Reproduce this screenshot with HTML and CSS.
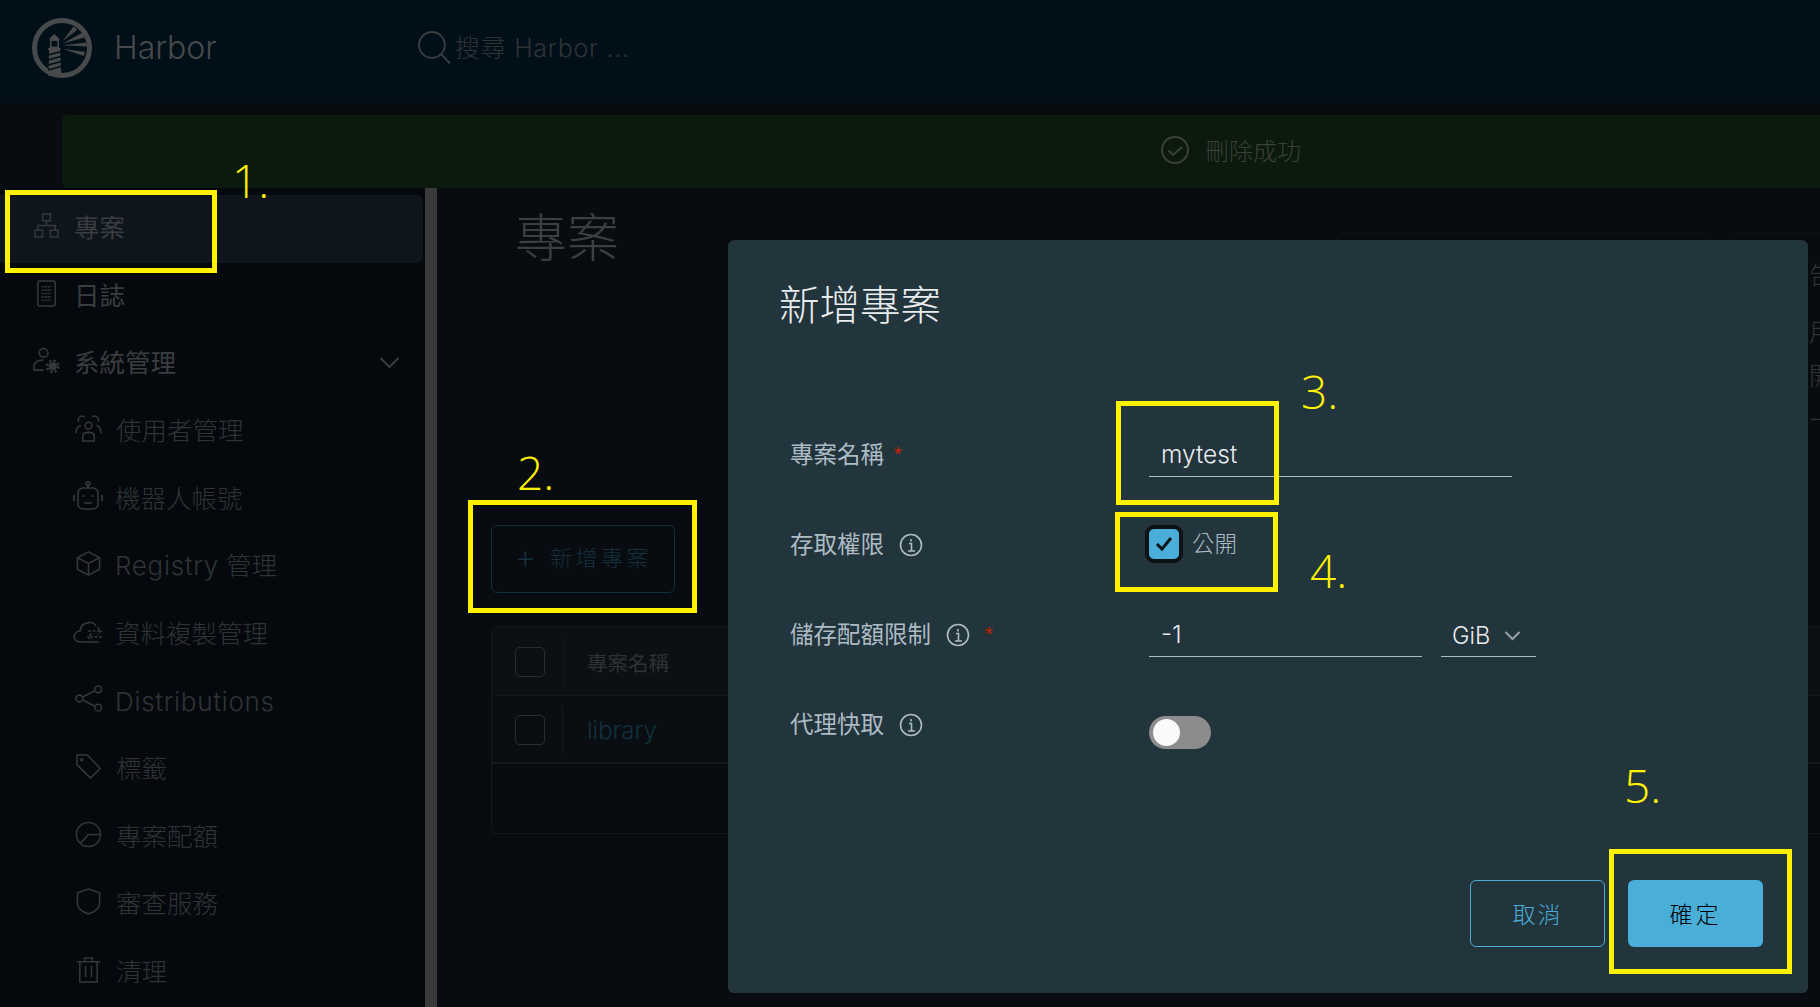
FILE: index.html
```html
<!DOCTYPE html>
<html lang="zh-Hant">
<head>
  <meta charset="UTF-8" />
  <meta name="viewport" content="width=device-width, initial-scale=1.0"/>
  <title>Harbor</title>
  <link rel="stylesheet" href="styles.css">
</head>
<body>
  <header class="topbar">
    <div class="brand">
      <svg class="logo" viewBox="0 0 60 60">
        <circle cx="30" cy="30" r="27.5" fill="none" stroke="currentColor" stroke-width="5"/>
        <path d="M22.200 16L28 21.200h-1v8.500h1.600V32H28l1.500 26h-13L17 32h-.8v-2.300H18v-8.500h-1.100z" fill="currentColor"/>
        <path d="M19.500 23h5.800v5.600h-5.800z" fill="#000f18"/>
        <path d="M16 37l13-3.500M16 42l13-3.500M16 47l13-3.500M16 52l13-3.500" stroke="#000f18" stroke-width="1.500"/>
        <path d="M30.700 22.900L41.500 8.400l4 3.400zM30.700 25.600l20.200-11.100 1.700 5.100zM30.700 27.300l23.900-2.700v4zM30.700 30.700L53.300 34l-1.700 4z" fill="currentColor"/>
      </svg>
      <span class="brand-name">Harbor</span>
    </div>
    <div class="search">
      <svg class="search-icon" viewBox="0 0 32 32" fill="none" stroke="currentColor" stroke-width="1.8">
        <circle cx="13.5" cy="13.5" r="12.5"/>
        <path d="M23 23l8 8.5"/>
      </svg>
      <span class="search-text">搜尋 Harbor ...</span>
    </div>
  </header>

  <div class="alert">
    <svg class="alert-icon" viewBox="0 0 30 30" fill="none" stroke="currentColor" stroke-width="2">
      <circle cx="15" cy="15" r="13"/>
      <path d="M8.500 15.500l4.500 4.500 9-8"/>
    </svg>
    <span>刪除成功</span>
  </div>

  <div class="layout">
    <nav class="sidebar">
      <a class="nav-item active">
        <svg class="nav-icon" viewBox="0 0 28 28"><path d="M10 2h8v7h-8zM14 9v5M5 19v-5h18v5M2 19h8v7H2zM18 19h8v7h-8z"/></svg>
        <span>專案</span>
      </a>
      <a class="nav-item">
        <svg class="nav-icon" viewBox="0 0 28 28"><rect x="5" y="1" width="18" height="26" rx="2"/><path d="M9 7h10M9 10.500h10M9 14h10M9 17.500h10M9 21h10" stroke-dasharray="2 1"/></svg>
        <span>日誌</span>
      </a>
      <a class="nav-item parent">
        <svg class="nav-icon" viewBox="0 0 28 28">
          <circle cx="11" cy="6" r="4.500"/>
          <path d="M1 24v-3c0-5 4-7.500 10-7.500M1 24h10"/>
          <circle class="gear-core" cx="20.500" cy="20" r="4.200"/>
          <circle class="gear-teeth" cx="20.500" cy="20" r="5.800"/>
        </svg>
        <span>系統管理</span>
        <svg class="chevron" viewBox="0 0 20 12"><path d="M1 1l9 9 9-9"/></svg>
      </a>
      <a class="nav-item child">
        <svg class="nav-icon" viewBox="0 0 28 28"><circle cx="14" cy="11" r="3.500"/><path d="M8 27v-5c0-3 3-4 6-4s6 1 6 4v5zM4 7a4 4 0 0 1 6-5M24 7a4 4 0 0 0-6-5M1 19c0-4 1-7 5-8M27 19c0-4-1-7-5-8"/></svg>
        <span>使用者管理</span>
      </a>
      <a class="nav-item child">
        <svg class="nav-icon big" viewBox="0 0 30 30"><rect x="5" y="7" width="20" height="21" rx="5"/><circle cx="15" cy="2.500" r="1.800"/><path d="M15 4.500V7M1 14v6M29 14v6M11 22h8M10.500 14v2M19.500 14v2"/></svg>
        <span>機器人帳號</span>
      </a>
      <a class="nav-item child">
        <svg class="nav-icon" viewBox="0 0 28 28"><path d="M14 2l11.500 6v12L14 26 2.500 20V8zM2.500 8L14 14l11.500-6M14 14v12"/></svg>
        <span class="latin">Registry<b>管理</b></span>
      </a>
      <a class="nav-item child">
        <svg class="nav-icon big" viewBox="0 0 30 30"><path d="M26 26H8c-9 0-9-10-1-11 1-9 13-11 16-5"/><path d="M15 15h13M24.500 11.500L28 15l-3.500 3.500M29 21H15M18.500 17.500L15 21l3.500 3.500" stroke-dasharray="3 1.500"/></svg>
        <span>資料複製管理</span>
      </a>
      <a class="nav-item child">
        <svg class="nav-icon" viewBox="0 0 28 28"><circle cx="24" cy="4.500" r="3.500"/><circle cx="4.500" cy="14" r="3.500"/><circle cx="24" cy="23.500" r="3.500"/><path d="M7.800 12.500L20.800 6M7.800 15.500l13 6.500"/></svg>
        <span class="latin only">Distributions</span>
      </a>
      <a class="nav-item child">
        <svg class="nav-icon" viewBox="0 0 28 28"><path d="M2 2h11l13 14-10 10L2 12z"/><circle cx="7" cy="7" r="1"/></svg>
        <span>標籤</span>
      </a>
      <a class="nav-item child">
        <svg class="nav-icon" viewBox="0 0 28 28"><circle cx="14" cy="14" r="12.500"/><path d="M6 23l8-9h12.500"/></svg>
        <span>專案配額</span>
      </a>
      <a class="nav-item child">
        <svg class="nav-icon" viewBox="0 0 28 28"><path d="M14 1l11.500 4v11c0 5-6 9-11.500 11C8.500 25 2.500 21 2.500 16V5z"/></svg>
        <span>審查服務</span>
      </a>
      <a class="nav-item child">
        <svg class="nav-icon" viewBox="0 0 28 28"><path d="M2 6h24M5 6v21h18V6M10 6V2h8v4M11 10v12M17 10v12"/></svg>
        <span>清理</span>
      </a>
    </nav>
    <div class="scrollbar"></div>

    <main class="content">
      <h1>專案</h1>
      <div class="summary">
        <div class="summary-card"></div>
        <div class="summary-card quota-card">
          <span>告</span>
          <span>用</span>
          <span>開</span>
          <span>十</span>
        </div>
      </div>
      <button class="new-btn"><span class="plus">+</span>新增專案</button>
      <div class="grid">
        <div class="grid-row head">
          <span class="box"></span><i class="sep"></i><span>專案名稱</span>
        </div>
        <div class="grid-row body-row">
          <span class="box"></span><i class="sep short"></i><a class="link">library</a>
        </div>
      </div>
    </main>
  </div>

  <section class="modal">
    <h2>新增專案</h2>
    <div class="form">
      <div class="field">
        <label>專案名稱<em class="tight">*</em></label>
        <div class="input wide">mytest</div>
      </div>
      <div class="field">
        <label>存取權限
          <svg class="info" viewBox="0 0 24 24"><circle cx="12" cy="12" r="10.500"/><path d="M10 10.500h2.500V18M9 18h7M12 6v2.500"/></svg>
        </label>
        <div class="check-wrap">
          <span class="check"><svg viewBox="0 0 18 16"><path d="M2 8l5 5 9-11"/></svg></span>
          <span>公開</span>
        </div>
      </div>
      <div class="field">
        <label>儲存配額限制
          <svg class="info" viewBox="0 0 24 24"><circle cx="12" cy="12" r="10.500"/><path d="M10 10.500h2.500V18M9 18h7M12 6v2.500"/></svg>
          <em>*</em>
        </label>
        <div class="input narrow">-1</div>
        <div class="input select">GiB
          <svg viewBox="0 0 16 10"><path d="M1 1l7 7 7-7"/></svg>
        </div>
      </div>
      <div class="field">
        <label>代理快取
          <svg class="info" viewBox="0 0 24 24"><circle cx="12" cy="12" r="10.500"/><path d="M10 10.500h2.500V18M9 18h7M12 6v2.500"/></svg>
        </label>
        <span class="toggle"><span class="knob"></span></span>
      </div>
    </div>
    <div class="actions">
      <button class="btn outline">取消</button>
      <button class="btn primary">確定</button>
    </div>
  </section>

  <!-- hand-drawn notes on top of the screenshot -->
  <div class="mark mark-1"></div><span class="note note-1">1.</span>
  <div class="mark mark-2"></div><span class="note note-2">2.</span>
  <div class="mark mark-3"></div><span class="note note-3">3.</span>
  <div class="mark mark-4"></div><span class="note note-4">4.</span>
  <div class="mark mark-5"></div><span class="note note-5">5.</span>
</body>
</html>
```

FILE: styles.css
```css
* {
  box-sizing: border-box;
}

html, body {
  height: 100%;
}

body {
  margin: 0;
  position: relative;
  overflow: hidden;
  background: #080c10;
  color: #3a3d40;
  font-family: "Inter", "Noto Sans CJK TC", sans-serif;
  font-weight: 300;
}

svg {
  display: block;
}

.topbar {
  height: 103px;
  display: flex;
  align-items: center;
  background: #000f18;
  color: #48494b;
}

.brand {
  width: 371px;
  height: 60px;
  margin-top: -8px;
  padding-left: 32px;
  display: flex;
  align-items: center;
  border-right: 1px solid #04141e;
}

.logo {
  width: 60px;
  height: 60px;
}

.brand-name {
  margin: 0 0 0 22px;
  font-size: 32px;
  font-weight: 300;
}

.search {
  margin-left: 47px;
  margin-top: -8px;
  display: flex;
  align-items: center;
  gap: 4px;
  font-size: 25px;
  color: #2f3336;
}

.search-text {
  margin-top: -4px;
  letter-spacing: 0.7px;
}

.search-icon {
  width: 33px;
  height: 33px;
  color: #3c3f42;
}

.alert {
  height: 73px;
  margin: 12px 0 0 62px;
  display: flex;
  align-items: center;
  gap: 15px;
  padding: 0 0 4px 1098px;
  background: #0b1a0c;
  border-radius: 5px 0 0 5px;
  color: #3a403a;
  font-size: 24px;
}

.alert-icon {
  width: 30px;
  height: 30px;
}

.layout {
  display: flex;
  height: 819px;
}

.sidebar {
  width: 425px;
  flex: none;
  padding: 7px 2px 0 0;
  background: #05090d;
}

.nav-item {
  height: 67.6px;
  padding: 0 0 6px 33px;
  display: flex;
  align-items: center;
  gap: 14px;
  font-size: 25.5px;
  color: #3a3d40;
  font-weight: 400;
}

.nav-item.active {
  background: #0e151c;
  border-radius: 0 6px 6px 0;
}

.nav-item.child {
  padding-left: 75px;
  color: #2f3336;
  font-weight: 300;
}

.nav-icon {
  width: 27px;
  height: 27px;
  flex: none;
  fill: none;
  stroke: #34383b;
  stroke-width: 1.6;
}

.nav-icon.big {
  width: 30px;
  height: 30px;
  margin: 0 -2px 0 -2px;
}

.latin {
  margin-left: -1px;
  font-size: 26px;
  letter-spacing: 0.7px;
}

.latin.only {
  margin-top: 5px;
}

.latin b {
  margin-left: 7px;
  font-size: 25.5px;
  letter-spacing: 0;
  font-weight: 300;
}

.gear-core {
  fill: #34383b;
  stroke: none;
}

.gear-teeth {
  stroke-width: 2.6;
  stroke-dasharray: 2.400 2.150;
}

.chevron {
  width: 21px;
  height: 12px;
  margin: 4px 23px 0 auto;
  fill: none;
  stroke: #3a3d40;
  stroke-width: 2;
}

.scrollbar {
  width: 12px;
  flex: none;
  background: #3a3a3a;
}

.content {
  flex: 1;
  min-width: 0;
  padding-left: 54px;
  background: #080c10;
}

.content h1 {
  margin: 20px 0 0 24px;
  font-size: 52px;
  line-height: 62px;
  font-weight: 300;
  color: #3c3f42;
}

.summary {
  display: flex;
  gap: 21px;
  margin: -37px 0 0 845px;
  height: 37px;
}

.summary-card {
  width: 374px;
  height: 60px;
  flex: none;
  border: 1px solid #0f1316;
  border-radius: 6px;
}

.quota-card {
  flex: 1;
  width: auto;
  min-width: 0;
  height: 210px;
  padding: 26px 0 0 77px;
  display: flex;
  flex-direction: column;
  overflow: hidden;
  border-right: 0;
  border-bottom: 0;
  border-radius: 6px 0 0 0;
  color: #2f3336;
  font-size: 25px;
  line-height: 30px;
}

.quota-card span:nth-child(2) {
  margin-top: 27px;
}

.quota-card span:nth-child(3) {
  margin-top: 14px;
}

.quota-card span:nth-child(4) {
  margin-top: 15px;
}

.new-btn {
  display: block;
  width: 184px;
  height: 68px;
  margin-top: 255px;
  padding: 0 0 7px;
  background: none;
  border: 1px solid #14303f;
  border-radius: 6px;
  color: #14303f;
  font: inherit;
  font-size: 22px;
  letter-spacing: 3.500px;
}

.plus {
  margin-right: 10px;
  font-size: 35px;
  font-weight: 200;
  line-height: 20px;
  vertical-align: -3px;
}

.grid {
  height: 208px;
  margin-top: 33px;
  border: 1px solid #14181b;
  border-right: 0;
  border-radius: 6px 0 0 6px;
}

.grid-row {
  height: 68px;
  padding-left: 23px;
  display: flex;
  align-items: center;
  border-bottom: 2px solid #14181b;
  background: #0a0e12;
}

.grid-row.head {
  height: 69px;
  padding-top: 2px;
  background: #0c1013;
  border-bottom-width: 1px;
  font-size: 20.500px;
  font-weight: 400;
  color: #2e3236;
}

.grid-row.body-row {
  padding-top: 2px;
}

.box {
  width: 30px;
  height: 30px;
  border: 1px solid #2a2d30;
  border-radius: 5px;
}

.sep {
  width: 1px;
  height: 47px;
  margin: 0 22px 0 19px;
  background: #16191c;
}

.sep.short {
  margin: 0 24px 0 17px;
}

.link {
  font-size: 24px;
  color: #12303f;
}

.modal {
  position: absolute;
  left: 728px;
  top: 240px;
  width: 1080px;
  height: 753px;
  padding: 38px 45px 45px 51px;
  background: #22343c;
  border-radius: 6px;
  color: #adbbc4;
  font-size: 23.500px;
}

.modal h2 {
  margin: 0;
  font-size: 40.500px;
  line-height: 56px;
  font-weight: 300;
  color: #e9ecef;
}

.form {
  margin: 101px 0 0 11px;
}

.field {
  display: flex;
  height: 90px;
  align-items: flex-start;
}

.field label {
  width: 359px;
  flex: none;
  margin-top: 3px;
  display: flex;
  align-items: center;
  font-weight: 400;
  line-height: 34px;
  gap: 15px;
}

.field em {
  margin-top: -2px;
  color: #c92100;
  font-family: "Liberation Sans", sans-serif;
  font-style: normal;
  font-size: 20px;
}

.field em.tight {
  margin-left: -5px;
}

.input {
  height: 42px;
  padding-left: 12px;
  border-bottom: 1px solid #acbac3;
  color: #e9ecef;
  font-size: 24.500px;
  line-height: 38px;
}

.wide {
  width: 363px;
}

.narrow {
  width: 273px;
}

.select {
  width: 95px;
  margin-left: 19px;
  padding-left: 11px;
  display: flex;
  align-items: center;
  gap: 14px;
  font-size: 23.500px;
}

.select svg {
  width: 17px;
  height: 10px;
  fill: none;
  stroke: #9aa3a8;
  stroke-width: 2;
}

.info {
  width: 24px;
  height: 24px;
  fill: none;
  stroke: #adbbc4;
  stroke-width: 1.6;
}

.check-wrap {
  display: flex;
  align-items: center;
  gap: 9px;
  margin-left: -4px;
  font-weight: 300;
  font-size: 22.500px;
  line-height: 38px;
}

.check {
  width: 38px;
  height: 38px;
  display: flex;
  align-items: center;
  justify-content: center;
  background: #49afd9;
  border: 4px solid #0f1214;
  border-radius: 9px;
}

.check svg {
  width: 18px;
  height: 16px;
  fill: none;
  stroke: #0d1418;
  stroke-width: 3;
}

.toggle {
  width: 62px;
  height: 33px;
  margin-top: 11px;
  padding: 3px 4px;
  background: #8c8c8c;
  border-radius: 17px;
}

.knob {
  display: block;
  width: 27px;
  height: 27px;
  background: #fafafa;
  border-radius: 50%;
}

.actions {
  position: absolute;
  right: 45px;
  bottom: 46px;
  display: flex;
  gap: 23px;
}

.btn {
  width: 135px;
  height: 67px;
  padding: 0 0 2px;
  border-radius: 6px;
  font: inherit;
  font-size: 23px;
  letter-spacing: 2px;
}

.btn.outline {
  background: none;
  border: 1px solid #49afd9;
  color: #49afd9;
}

.btn.primary {
  background: #49afd9;
  border: 0;
  color: #000;
  letter-spacing: 3px;
}

.mark {
  position: absolute;
  border: 5px solid #fff200;
}

.mark-1 { left: 5px; top: 190px; width: 212px; height: 83px; }
.mark-2 { left: 468px; top: 500px; width: 229px; height: 113px; }
.mark-3 { left: 1116px; top: 401px; width: 163px; height: 104px; }
.mark-4 { left: 1115px; top: 512px; width: 163px; height: 80px; }
.mark-5 { left: 1609px; top: 849px; width: 183px; height: 125px; }

.note {
  position: absolute;
  color: #fff200;
  font-family: "Open Sans", sans-serif;
  font-weight: 300;
  font-size: 46px;
  line-height: 48px;
}

.note-1 { left: 232px; top: 156px; }
.note-2 { left: 517px; top: 448px; }
.note-3 { left: 1301px; top: 367px; }
.note-4 { left: 1310px; top: 546px; }
.note-5 { left: 1624px; top: 761px; }
```
